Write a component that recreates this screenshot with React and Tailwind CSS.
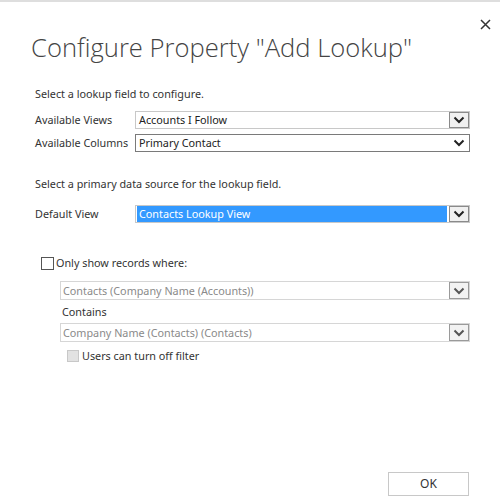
import React from "react";

const Chevron = ({ color = "#222" }) => (
  <svg width="12" height="8" viewBox="0 0 12 8">
    <path d="M1.5 1.5 L6 6 L10.5 1.5" fill="none" stroke={color} strokeWidth="2" />
  </svg>
);

function Select({ text, variant }) {
  const border =
    variant === "dark" ? "border-[#7a7a7a]" : variant === "disabled" ? "border-[#d6d6d6]" : "border-[#c8c8c8]";
  return (
    <div className={`flex h-[18px] w-[335px] items-stretch border ${border} bg-white`}>
      <div className="flex flex-1 items-center overflow-hidden pl-[1px] pr-[2px]">
        <div
          className={`flex h-full w-full items-center pl-[2px] ${
            variant === "selected" ? "bg-[#3399ff] text-white" : "text-[#222]"
          }`}
        >
          {text}
        </div>
      </div>
      {variant === "dark" ? (
        <div className="flex w-[20px] items-center justify-center">
          <Chevron />
        </div>
      ) : (
        <div className="flex w-[20px] items-center justify-center border border-[#8a8a8a] bg-[#f0f0f0]">
          <Chevron />
        </div>
      )}
    </div>
  );
}

function SelectWide({ text }) {
  return (
    <div className="flex h-[19px] w-[410px] items-stretch border border-[#d6d6d6] bg-white">
      <div className="flex flex-1 items-center pl-[2px] text-[#8a8a8a]">{text}</div>
      <div className="flex w-[20px] items-center justify-center border border-[#9a9a9a] bg-[#f2f2f2]">
        <Chevron color="#555" />
      </div>
    </div>
  );
}

export default function App() {
  return (
    <div
      className="relative h-[504px] w-[500px] overflow-hidden border-t-2 border-[#dedede] bg-white text-[10.8px] text-[#333]"
      style={{ fontFamily: '"Segoe UI", "Noto Sans", "Open Sans", sans-serif' }}
    >
      <div className="absolute right-[9px] top-[17px]">
        <svg width="11" height="11" viewBox="0 0 11 11">
          <path d="M1 1 L10 10 M10 1 L1 10" stroke="#333" strokeWidth="1.5" />
        </svg>
      </div>
      <div
        className="ml-[31px] mt-[28px] text-[25.6px] leading-[36px] text-[#444]"
        style={{ fontFamily: '"Open Sans", "Noto Sans", sans-serif', fontWeight: 300 }}
      >
        Configure Property "Add Lookup"
      </div>
      <div className="ml-[35px] mt-[21px] leading-[14px]">Select a lookup field to configure.</div>
      <div className="ml-[35px] mt-[10px] flex flex-col gap-[5px]">
        <div className="flex items-center">
          <div className="w-[100px]">Available Views</div>
          <Select text="Accounts I Follow" variant="light" />
        </div>
        <div className="flex items-center">
          <div className="w-[100px]">Available Columns</div>
          <Select text="Primary Contact" variant="dark" />
        </div>
      </div>
      <div className="ml-[35px] mt-[25px] leading-[14px]">Select a primary data source for the lookup field.</div>
      <div className="ml-[35px] mt-[14px] flex items-center">
        <div className="w-[100px]">Default View</div>
        <Select text="Contacts Lookup View" variant="selected" />
      </div>
      <div className="ml-[41px] mt-[32px] flex items-center">
        <div className="h-[13px] w-[13px] border border-[#555] bg-white" />
        <div className="ml-[2px]">Only show records where:</div>
      </div>
      <div className="ml-[60px] mt-[10px] flex flex-col">
        <SelectWide text="Contacts (Company Name (Accounts))" />
        <div className="ml-[2px] mt-[5px] leading-[14px]">Contains</div>
        <div className="mt-[4px]">
          <SelectWide text="Company Name (Contacts) (Contacts)" />
        </div>
        <div className="ml-[7px] mt-[6px] flex items-center">
          <div className="h-[12px] w-[12px] border border-[#c8c8c8] bg-[#e2e2e2]" />
          <div className="ml-[3px]">Users can turn off filter</div>
        </div>
      </div>
      <div className="absolute left-[388px] top-[470px] flex h-[24px] w-[81px] items-center justify-center border border-[#c8c8c8] bg-white text-[12px] text-[#333]">
        OK
      </div>
    </div>
  );
}
